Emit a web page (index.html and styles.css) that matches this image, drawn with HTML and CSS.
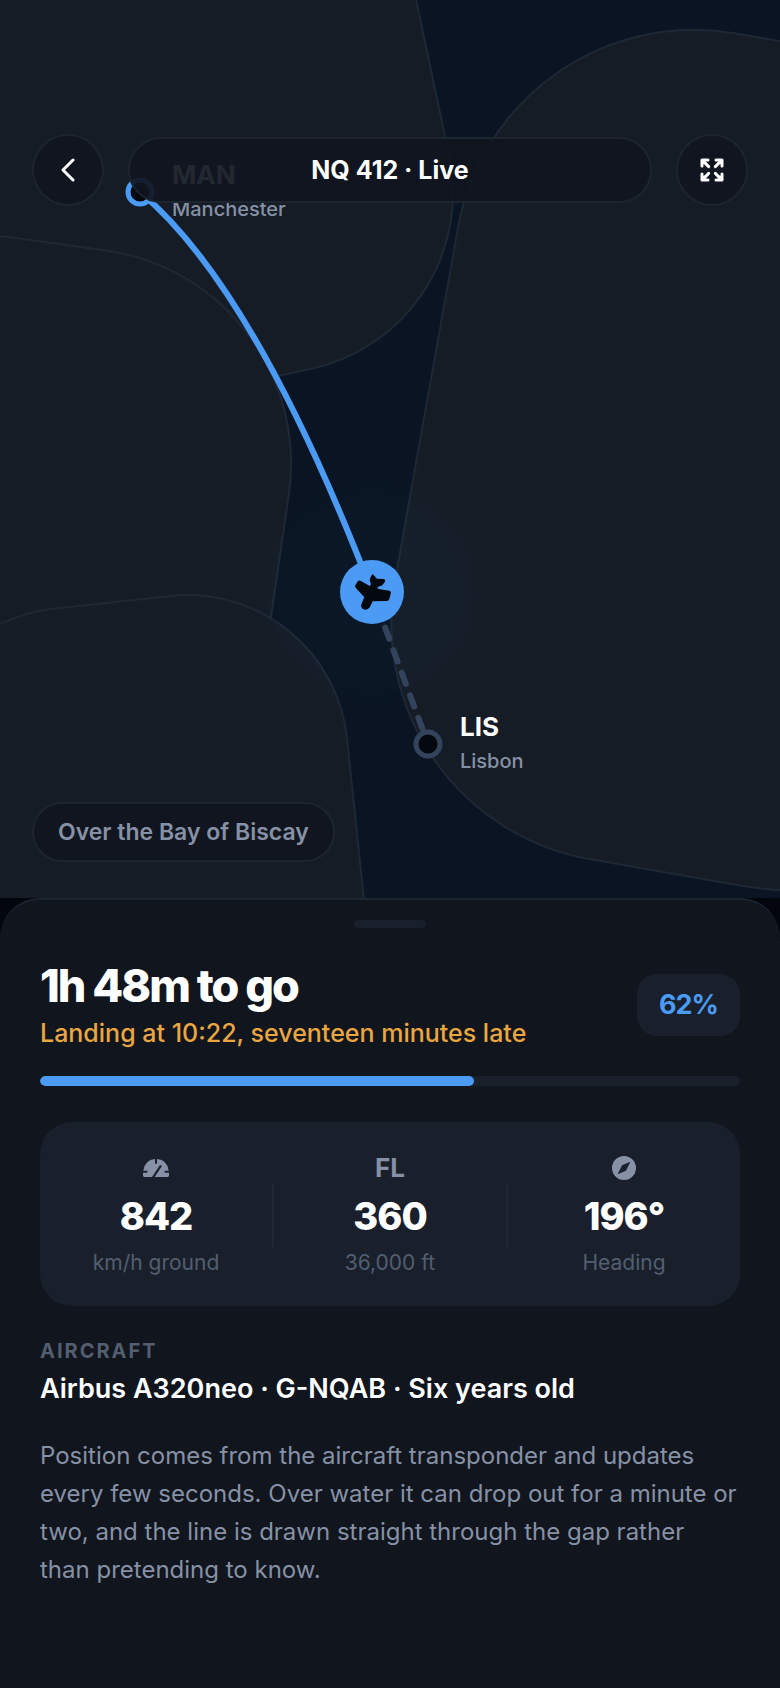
FILE: index.html
```
<!DOCTYPE html>
<html lang="en">
<head>
    <meta charset="UTF-8">
    <meta name="viewport" content="width=device-width, initial-scale=1.0">
    <title>NQ 412 · Live</title>
    <link rel="stylesheet" href="styles.css">
</head>
<body>
    <section class="map-section">
        <svg class="map" viewBox="0 0 780 898" preserveAspectRatio="xMidYMid slice" role="img" aria-label="Route from Manchester to Lisbon">
            <defs>
                <radialGradient id="glow">
                    <stop offset="0" stop-color="#1f7090" stop-opacity="0.04" />
                    <stop offset="0.8" stop-color="#1f7090" stop-opacity="0.03" />
                    <stop offset="1" stop-color="#1f7090" stop-opacity="0" />
                </radialGradient>
            </defs>

            <!-- Land -->
            <g class="land">
                <path d="M-10 -10H414L449 155A180 180 0 0 1 310 369L200 393L-10 420Z" />
                <path d="M-10 235Q15 238 30 240L106 250.500A215 215 0 0 1 289 493L271 617L240 900H-10Z" />
                <path d="M-10 629Q22 612 55 608.500L171 596A160 160 0 0 1 347 738L365 910H-10Z" />
                <path d="M790 43L736 33.500A240 240 0 0 0 458 228L395 581A240 240 0 0 0 589 859L740 885.500Q762 889 790 891Z" />
            </g>

            <circle cx="372" cy="592" r="118" fill="url(#glow)" />

            <!-- Route -->
            <path class="route-left" d="M372 592L428 744" />
            <path class="route-flown" d="M140 192Q255 288 372 592" />
            <circle class="stop stop-from" cx="140" cy="192" r="12" />
            <circle class="stop stop-to" cx="428" cy="744" r="12" />

            <circle class="plane-disc" cx="372" cy="592" r="32" />
            <path class="plane" transform="translate(335 555) scale(0.333)" d="M61 91L69 78Q73 75 78 78L103 92Q109 92 107 85L104 75Q107 62 113 57L126 71L147 72Q153 74 150 80L142 91L129 96Q125 100 131 102L164 107Q169 109 168 114L163 133Q161 139 154 138L113 139L104 158Q98 166 88 164Q76 160 79 149L88 127L62 98Q59 95 61 91Z" />

            <text class="code" x="172" y="184">MAN</text>
            <text class="city" x="172" y="216">Manchester</text>
            <text class="code" x="460" y="736">LIS</text>
            <text class="city" x="460" y="768">Lisbon</text>
        </svg>

        <header class="top-bar">
            <button type="button" class="round-btn" aria-label="Back">
                <svg width="14" height="24" viewBox="0 0 14 24" fill="none" stroke="currentColor" stroke-width="3" stroke-linecap="round" stroke-linejoin="round">
                    <path d="M12 2L2 12L12 22" />
                </svg>
            </button>
            <h1 class="flight">NQ 412 · Live</h1>
            <button type="button" class="round-btn" aria-label="Full screen">
                <svg width="24" height="24" viewBox="0 0 72 72" fill="none" stroke="currentColor" stroke-width="9" stroke-linecap="round" stroke-linejoin="round">
                    <path d="M6 24V6H24M8 8L26 26M48 6H66V24M64 8L46 26M6 48V66H24M8 64L26 46M48 66H66V48M64 64L46 46" />
                </svg>
            </button>
        </header>

        <p class="place">Over the Bay of Biscay</p>
    </section>

    <main class="sheet">
        <div class="handle"></div>

        <div class="summary">
            <div>
                <h2>1h 48m to go</h2>
                <p class="landing">Landing at 10:22, seventeen minutes late</p>
            </div>
            <span class="percent">62%</span>
        </div>

        <div class="progress" role="progressbar" aria-label="Flight progress" aria-valuemin="0" aria-valuemax="100" aria-valuenow="62">
            <div class="progress-fill" style="width: 62%"></div>
        </div>

        <div class="stats">
            <div class="stat">
                <div class="stat-icon">
                    <svg width="26" height="18" viewBox="0 0 78 54">
                        <path fill="currentColor" d="M4 54Q0 54 0 49V41H13V35H1Q5 3 36 0V14H42V0Q73 3 77 35H65V41H78V49Q78 54 74 54H35L57 21L51 18L27 54Z" />
                    </svg>
                </div>
                <strong>842</strong>
                <span>km/h ground</span>
            </div>
            <div class="stat">
                <div class="stat-icon">FL</div>
                <strong>360</strong>
                <span>36,000 ft</span>
            </div>
            <div class="stat">
                <div class="stat-icon">
                    <svg width="24" height="24" viewBox="0 0 72 72">
                        <path fill="currentColor" fill-rule="evenodd" d="M36 0A36 36 0 1 1 36 72A36 36 0 1 1 36 0ZM55 17L30 28L17 55L42 44Z" />
                    </svg>
                </div>
                <strong>196°</strong>
                <span>Heading</span>
            </div>
        </div>

        <h3>Aircraft</h3>
        <p class="aircraft">Airbus A320neo · G-NQAB · Six years old</p>

        <p class="note">Position comes from the aircraft transponder and updates every few seconds. Over water it can drop out for a minute or two, and the line is drawn straight through the gap rather than pretending to know.</p>
    </main>
</body>
</html>
```
FILE: styles.css
```
/* General Styles */
* {
    box-sizing: border-box;
}

body {
    font-family: Inter, "Liberation Sans", sans-serif;
    margin: 0;
    min-height: 100vh;
    display: flex;
    flex-direction: column;
    background-color: #03060d;
    color: #fff;
}

h1, h2, h3, p {
    margin: 0;
}

/* Map */
.map-section {
    position: relative;
    aspect-ratio: 780 / 898;
    padding: 134px 32px 36px;
    display: flex;
    flex-direction: column;
    justify-content: space-between;
    align-items: flex-start;
    background-color: #0a1422;
}

.map {
    position: absolute;
    top: 0;
    left: 0;
    width: 100%;
    height: 100%;
}

.land path {
    fill: #151c26;
    stroke: #1e2835;
    stroke-width: 2;
}

.route-flown {
    fill: none;
    stroke: #4b9bf5;
    stroke-width: 6;
}

.route-left {
    stroke: #33435b;
    stroke-width: 6;
    stroke-linecap: round;
    stroke-dasharray: 12 12;
    stroke-dashoffset: 10;
}

.stop {
    fill: #04080f;
    stroke-width: 5;
}

.stop-from {
    stroke: #4b9bf5;
}

.stop-to {
    stroke: #33435b;
}

.plane-disc {
    fill: #4b9bf5;
}

.plane {
    fill: #04080f;
}

.code {
    fill: #fff;
    font-size: 26px;
    font-weight: 700;
}

.city {
    fill: #8791a5;
    font-size: 20px;
    font-weight: 500;
}

.top-bar {
    position: relative;
    width: 100%;
    display: flex;
    align-items: center;
    gap: 24px;
}

.round-btn {
    flex: none;
    width: 72px;
    height: 72px;
    padding: 0;
    display: flex;
    align-items: center;
    justify-content: center;
    background-color: rgba(16, 21, 30, 0.92);
    border: 2px solid #1c2430;
    border-radius: 50%;
    color: #fff;
    cursor: pointer;
}

.flight {
    flex: 1;
    padding: 15px 24px;
    background-color: rgba(16, 21, 30, 0.92);
    border: 2px solid #1c2430;
    border-radius: 33px;
    font-size: 25px;
    font-weight: 700;
    line-height: 32px;
    text-align: center;
}

.place {
    position: relative;
    padding: 12px 24px;
    background-color: rgba(16, 21, 30, 0.92);
    border: 2px solid #1c2430;
    border-radius: 30px;
    color: #8791a5;
    font-size: 23px;
    font-weight: 600;
    line-height: 32px;
}

/* Sheet */
.sheet {
    flex: 1;
    padding: 20px 40px 40px;
    background-color: #10151e;
    border-top: 2px solid #1c2430;
    border-radius: 40px 40px 0 0;
}

.handle {
    width: 72px;
    height: 8px;
    margin: 0 auto 32px;
    background-color: #19202c;
    border-radius: 4px;
}

.summary {
    display: flex;
    justify-content: space-between;
    align-items: center;
    gap: 20px;
}

h2 {
    font-size: 45px;
    font-weight: 800;
    line-height: 52px;
    letter-spacing: -2px;
}

.landing {
    margin-top: 4px;
    color: #eaa640;
    font-size: 25px;
    font-weight: 500;
    line-height: 34px;
}

.percent {
    padding: 15px 22px;
    background-color: #19202c;
    border-radius: 20px;
    color: #4b9bf5;
    font-size: 27px;
    font-weight: 700;
    line-height: 32px;
    letter-spacing: -1px;
}

.progress {
    height: 10px;
    margin-top: 26px;
    background-color: #19202c;
    border-radius: 5px;
    overflow: hidden;
}

.progress-fill {
    height: 100%;
    background-color: #4b9bf5;
    border-radius: 5px;
}

.stats {
    margin-top: 36px;
    padding: 30px 0 28px;
    display: grid;
    grid-template-columns: repeat(3, 1fr);
    gap: 2px;
    background-color: #19202c;
    border-radius: 32px;
}

.stat {
    position: relative;
    display: flex;
    flex-direction: column;
    align-items: center;
    gap: 8px;
}

/* Short rule between two stats */
.stat + .stat::before {
    content: "";
    position: absolute;
    left: -2px;
    top: 50%;
    width: 2px;
    height: 64px;
    margin-top: -32px;
    background-color: #1f2734;
}

.stat-icon {
    height: 32px;
    display: flex;
    align-items: center;
    color: #8791a5;
    font-size: 26px;
    font-weight: 700;
    line-height: 32px;
}

.stat strong {
    font-size: 38px;
    font-weight: 800;
    line-height: 48px;
    letter-spacing: -1px;
}

.stat span {
    color: #535e6f;
    font-size: 21px;
    line-height: 30px;
}

h3 {
    margin-top: 32px;
    color: #535e6f;
    font-size: 20px;
    font-weight: 700;
    line-height: 26px;
    letter-spacing: 2px;
    text-transform: uppercase;
}

.aircraft {
    margin-top: 8px;
    font-size: 27px;
    font-weight: 600;
    line-height: 33px;
}

.note {
    margin-top: 32px;
    color: #8791a5;
    font-size: 24px;
    line-height: 38px;
}
```
